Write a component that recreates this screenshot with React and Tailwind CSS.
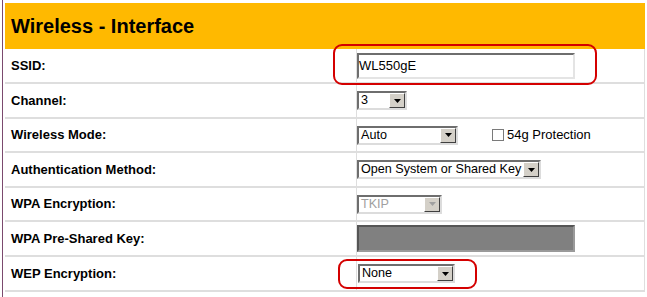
import React from "react";

// little down arrow button used by the old-style selects
function DropButton({ disabled }) {
  return (
    <span className="flex w-[16px] shrink-0 items-center justify-center border border-t-white border-l-white border-b-[#404040] border-r-[#404040] bg-[#d4d0c8]">
      <svg width="7" height="4" viewBox="0 0 7 4">
        <path d="M0 0h7L3.5 4z" fill={disabled ? "#a0a0a0" : "#000"} />
      </svg>
    </span>
  );
}

function Select({ value, className, disabled }) {
  return (
    <div
      className={`flex h-[19px] border-2 border-t-[#6e6e6e] border-l-[#6e6e6e] border-b-[#dcdcdc] border-r-[#dcdcdc] bg-white ${className}`}
    >
      <span
        className={`flex-1 overflow-hidden whitespace-nowrap pl-[2px] text-[12.6px] leading-[15px] ${
          disabled ? "text-[#a0a0a0]" : "text-black"
        }`}
      >
        {value}
      </span>
      <DropButton disabled={disabled} />
    </div>
  );
}

function Row({ label, height, children }) {
  return (
    <div
      className={`flex border-b-2 border-r border-b-[#dedede] border-r-[#dedede] ${height}`}
    >
      <div className="flex w-[351px] items-center pl-[6px] text-[13px] font-bold text-black">
        {label}
      </div>
      <div className="flex flex-1 items-center border-l border-[#dedede]">
        {children}
      </div>
    </div>
  );
}

export default function App() {
  return (
    <div className="relative h-[297px] w-[647px] overflow-hidden bg-white font-['Liberation_Sans',Arial,sans-serif]">
      <div className="ml-[2px] h-full w-[643px] border-l border-[#7b4a6e] pl-[2px] pt-[3px]">
        <div className="flex h-[46px] items-center bg-[#ffb900] pl-[6px] text-[20px] font-bold text-black">
          Wireless - Interface
        </div>

        <Row label="SSID:" height="h-[35px]">
          <div className="flex h-[26px] w-[218px] items-center border-2 border-t-[#6e6e6e] border-l-[#6e6e6e] border-b-[#e4e4e4] border-r-[#e4e4e4] bg-white text-[13px]">
            WL550gE
          </div>
        </Row>

        <Row label="Channel:" height="h-[35px]">
          <Select value="3" className="w-[50px]" />
        </Row>

        <Row label="Wireless Mode:" height="h-[34px]">
          <Select value="Auto" className="w-[101px]" />
          <span className="ml-[34px] h-[12px] w-[12px] border border-[#7a7a7a] bg-white" />
          <span className="ml-[3px] text-[13px] text-black">54g Protection</span>
        </Row>

        <Row label="Authentication Method:" height="h-[35px]">
          <Select value="Open System or Shared Key" className="w-[184px]" />
        </Row>

        <Row label="WPA Encryption:" height="h-[34px]">
          <Select value="TKIP" className="w-[85px]" disabled />
        </Row>

        <Row label="WPA Pre-Shared Key:" height="h-[35px]">
          <div className="h-[27px] w-[218px] border-2 border-t-[#555] border-l-[#555] border-b-[#9a9a9a] border-r-[#9a9a9a] bg-[#808080]" />
        </Row>

        <Row label="WEP Encryption:" height="h-[35px]">
          <Select value="None" className="ml-[1px] w-[97px]" />
        </Row>
      </div>

      {/* red annotation boxes */}
      <div className="absolute left-[333px] top-[44px] h-[41px] w-[264px] rounded-[9px] border-2 border-[#d40000]" />
      <div className="absolute left-[338px] top-[259px] h-[30px] w-[139px] rounded-[9px] border-2 border-[#d40000]" />
    </div>
  );
}
